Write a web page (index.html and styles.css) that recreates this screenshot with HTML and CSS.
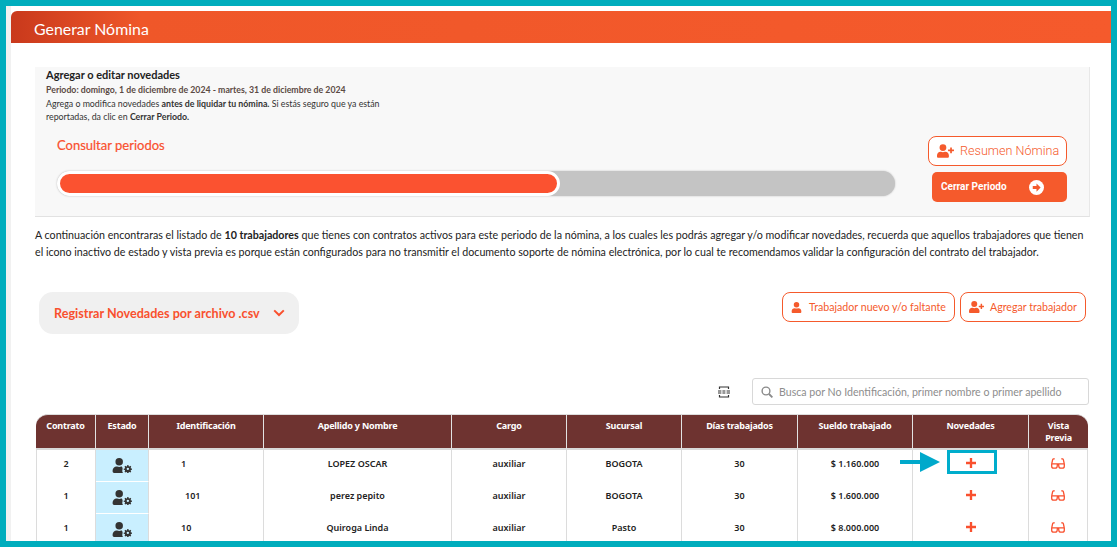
FILE: index.html
```html
<!DOCTYPE html>
<html lang="es">

<head>
    <meta charset="UTF-8">
    <title>Generar Nómina</title>
    <link rel="stylesheet" href="styles.css">
</head>

<body>
    <svg class="defs" width="0" height="0">
        <symbol id="user-plus" viewBox="0 0 640 512">
            <path d="M224 256a128 128 0 1 0 0-256 128 128 0 0 0 0 256zm90 32h-17a174 174 0 0 1-146 0h-17C60 288 0 348 0 422v42c0 26 22 48 48 48h352c26 0 48-22 48-48v-42c0-74-60-134-134-134zM624 200h-64v-64c0-9-7-16-16-16h-32c-9 0-16 7-16 16v64h-64c-9 0-16 7-16 16v32c0 9 7 16 16 16h64v64c0 9 7 16 16 16h32c9 0 16-7 16-16v-64h64c9 0 16-7 16-16v-32c0-9-7-16-16-16z" />
        </symbol>
        <symbol id="user" viewBox="0 0 448 512">
            <path d="M224 256a128 128 0 1 0 0-256 128 128 0 0 0 0 256zm90 32h-17a174 174 0 0 1-146 0h-17C60 288 0 348 0 422v42c0 26 22 48 48 48h352c26 0 48-22 48-48v-42c0-74-60-134-134-134z" />
        </symbol>
        <symbol id="user-cog" viewBox="0 0 640 512">
            <path d="M224 256a128 128 0 1 0 0-256 128 128 0 0 0 0 256zm90 32h-17a174 174 0 0 1-146 0h-17C60 288 0 348 0 422v42c0 26 22 48 48 48h310a80 80 0 0 1-28-62c0-28 2-50 12-72a130 130 0 0 0-28-88z" />
            <path fill-rule="evenodd" d="M500 240l40 0 8 38 26 11 33-21 28 28-21 33 11 26 38 8v40l-38 8-11 26 21 33-28 28-33-21-26 11-8 38h-40l-8-38-26-11-33 21-28-28 21-33-11-26-38-8v-40l38-8 11-26-21-33 28-28 33 21 26-11zm20 90a40 40 0 1 0 0 80 40 40 0 0 0 0-80z" />
        </symbol>
        <symbol id="plus" viewBox="0 0 12 12">
            <path d="M4.600 0h2.800v4.600H12v2.800H7.400V12H4.600V7.400H0V4.600h4.600z" />
        </symbol>
        <symbol id="glasses" viewBox="0 0 14 11">
            <g fill="none" stroke="currentColor" stroke-width="1.300">
                <path d="M.7 5.800h12.600M.7 5.800v2.400c0 1.200.8 2 2 2h1.400c1.200 0 2-.8 2.100-2l.2-2.400M13.300 5.800v2.400c0 1.200-.8 2-2 2H9.900c-1.200 0-2-.8-2.100-2l-.2-2.400" />
                <path d="M.7 5.800L1.600 1.800C1.800 .9 2.800 .6 3.800 1M13.300 5.800L12.400 1.800C12.200 .9 11.200 .6 10.200 1" />
            </g>
        </symbol>
    </svg>

    <div class="frame">
        <header class="page-title">Generar Nómina</header>

        <main>
            <section class="panel">
                <h2>Agregar o editar novedades</h2>
                <p class="period">Periodo: domingo, 1 de diciembre de 2024 - martes, 31 de diciembre de 2024</p>
                <p class="hint">Agrega o modifica novedades <b>antes de liquidar tu nómina.</b> Si estás seguro que ya están reportadas, da clic en <b>Cerrar Periodo.</b></p>

                <div class="panel-row">
                    <div class="progress-col">
                        <h3>Consultar periodos</h3>
                        <div class="progress">
                            <div class="progress-bar"></div>
                        </div>
                    </div>
                    <div class="panel-actions">
                        <button class="btn-line btn-big"><svg class="ico-wide"><use href="#user-plus" /></svg><span>Resumen Nómina</span></button>
                        <button class="btn-solid"><span>Cerrar Periodo</span>
                            <svg class="ico-go" viewBox="0 0 16 16">
                                <circle cx="8" cy="8" r="8" fill="#fff" />
                                <path d="M8 3.600l4.400 4.400L8 12.400V9.600H4V6.400h4z" fill="#f55a2c" />
                            </svg>
                        </button>
                    </div>
                </div>
            </section>

            <p class="intro">A continuación encontraras el listado de <b>10 trabajadores</b> que tienes con contratos activos para este periodo de la nómina, a los cuales les podrás agregar y/o modificar novedades, recuerda que aquellos trabajadores que tienen el icono inactivo de estado y vista previa es porque están configurados para no transmitir el documento soporte de nómina electrónica, por lo cual te recomendamos validar la configuración del contrato del trabajador.</p>

            <div class="tools-row">
                <div class="csv-toggle">Registrar Novedades por archivo .csv
                    <svg viewBox="0 0 12 8" width="12" height="8">
                        <path d="M1.200 1.400L6 6l4.800-4.600" fill="none" stroke="#f9502e" stroke-width="2" />
                    </svg>
                </div>
                <div class="tools-buttons">
                    <button class="btn-line"><svg class="ico-user"><use href="#user" /></svg><span>Trabajador nuevo y/o faltante</span></button>
                    <button class="btn-line"><svg class="ico-wide"><use href="#user-plus" /></svg><span>Agregar trabajador</span></button>
                </div>
            </div>

            <div class="search-row">
                <svg class="ico-export" viewBox="0 0 12 12">
                    <path d="M1.500 3V1h9v2M1.500 9v2h9V9" fill="none" stroke="#333" stroke-width="1.200" />
                    <path d="M0 4.400h3.400v1H0zM0 6.600h3.400v1H0zM4.400 4.400h3v1h-3zM4.400 6.600h3v1h-3zM8.600 4.400H12v1H8.600zM8.600 6.600H12v1H8.600z" fill="#333" />
                </svg>
                <div class="search-box">
                    <svg viewBox="0 0 12 12" width="12" height="12">
                        <circle cx="5" cy="5" r="3.900" fill="none" stroke="#8a8a8a" stroke-width="1.400" />
                        <path d="M8 8l3.400 3.400" stroke="#8a8a8a" stroke-width="1.800" />
                    </svg>
                    <span>Busca por No Identificación, primer nombre o primer apellido</span>
                </div>
            </div>

            <div class="table-wrap">
                <table>
                    <colgroup>
                        <col class="c1"><col class="c2"><col class="c3"><col class="c4"><col class="c5">
                        <col class="c6"><col class="c7"><col class="c8"><col class="c9"><col class="c10">
                    </colgroup>
                    <thead>
                        <tr>
                            <th>Contrato</th>
                            <th>Estado</th>
                            <th>Identificación</th>
                            <th>Apellido y Nombre</th>
                            <th>Cargo</th>
                            <th>Sucursal</th>
                            <th>Días trabajados</th>
                            <th>Sueldo trabajado</th>
                            <th>Novedades</th>
                            <th>Vista Previa</th>
                        </tr>
                    </thead>
                    <tbody>
                        <tr>
                            <td>2</td>
                            <td class="estado"><svg><use href="#user-cog" /></svg></td>
                            <td class="ident">1</td>
                            <td>LOPEZ OSCAR</td>
                            <td>auxiliar</td>
                            <td>BOGOTA</td>
                            <td>30</td>
                            <td>$ 1.160.000</td>
                            <td class="nov">
                                <svg class="ico-plus"><use href="#plus" /></svg>
                                <span class="mark-box"></span>
                                <svg class="mark-arrow" viewBox="0 0 40 20" width="40" height="20">
                                    <path d="M0 8h20V0l20 10-20 10v-8H0z" fill="#00a9cb" />
                                </svg>
                            </td>
                            <td class="vista"><svg><use href="#glasses" /></svg></td>
                        </tr>
                        <tr>
                            <td>1</td>
                            <td class="estado"><svg><use href="#user-cog" /></svg></td>
                            <td class="ident ident-long">101</td>
                            <td>perez pepito</td>
                            <td>auxiliar</td>
                            <td>BOGOTA</td>
                            <td>30</td>
                            <td>$ 1.600.000</td>
                            <td class="nov"><svg class="ico-plus"><use href="#plus" /></svg></td>
                            <td class="vista"><svg><use href="#glasses" /></svg></td>
                        </tr>
                        <tr>
                            <td>1</td>
                            <td class="estado"><svg><use href="#user-cog" /></svg></td>
                            <td class="ident">10</td>
                            <td>Quiroga Linda</td>
                            <td>auxiliar</td>
                            <td>Pasto</td>
                            <td>30</td>
                            <td>$ 8.000.000</td>
                            <td class="nov"><svg class="ico-plus"><use href="#plus" /></svg></td>
                            <td class="vista"><svg><use href="#glasses" /></svg></td>
                        </tr>
                    </tbody>
                </table>
            </div>
        </main>
    </div>
</body>

</html>
```

FILE: styles.css
```css
* {
    box-sizing: border-box;
    padding: 0;
    margin: 0;
}

html,
body {
    height: 547px;
    overflow: hidden;
}

body {
    font-family: Lato, "Liberation Sans", sans-serif;
    color: #222;
    background: #fff;
}

.defs {
    position: absolute;
}

button {
    font-family: inherit;
    cursor: pointer;
}

button span {
    margin-bottom: 2px;
}

.frame {
    height: 547px;
    border: 6px solid #00adbd;
    padding: 5px 0 0 5px;
    background: linear-gradient(90deg, #f1f1f1 5px, #fff 5px);
    overflow: hidden;
}

.page-title {
    height: 32px;
    padding-left: 23px;
    font-size: 15.9px;
    line-height: 35px;
    color: #fff;
    border-radius: 6px 0 0 0;
    background: linear-gradient(90deg, #c9391c 0, #ef5729 130px, #f55a2c 100%);
}

main {
    padding: 24px 21px 0 24px;
}

/* bloque gris de arriba */
.panel {
    height: 150px;
    padding: 1px 22px 0 11px;
    background: #f8f8f8;
    border-bottom: 1px solid #e2e2e2;
    border-right: 1px solid #e8e8e8;
}

.panel h2 {
    font-size: 11px;
    line-height: 14px;
    font-weight: 700;
    color: #222;
}

.period {
    margin-top: 1px;
    font-size: 8.75px;
    line-height: 14px;
    font-weight: 700;
    color: #5b4a44;
}

.hint {
    width: 340px;
    font-size: 8.8px;
    line-height: 13px;
    color: #333;
}

.hint b {
    font-weight: 700;
}

.panel-row {
    display: flex;
    justify-content: space-between;
    margin-top: 13px;
}

.progress-col {
    padding-left: 11px;
}

.progress-col h3 {
    margin-top: -1px;
    font-size: 13px;
    line-height: 20px;
    font-weight: 400;
    color: #f9502e;
    -webkit-text-stroke: 0.2px #f9502e;
}

.progress {
    width: 838px;
    height: 25px;
    margin-top: 16px;
    border-radius: 13px;
    background: #c4c4c4;
    box-shadow: 0 0 2px #bbb;
}

.progress-bar {
    width: 503px;
    height: 25px;
    border-radius: 13px;
    background: #fb5230;
    border: 3px solid #fff;
}

.panel-actions {
    display: flex;
    flex-direction: column;
    align-items: flex-end;
    gap: 6px;
}

.btn-line {
    display: inline-flex;
    align-items: center;
    height: 30px;
    padding: 0 8px;
    font-size: 10.65px;
    color: #f55a2c;
    background: #fff;
    border: 1px solid #f55a2c;
    border-radius: 8px;
    white-space: nowrap;
}

.btn-big {
    width: 139px;
    font-size: 12.6px;
    padding: 0 0 0 8px;
    font-family: Roboto, sans-serif;
    font-weight: 300;
}

.btn-big .ico-wide {
    width: 17px;
    height: 14px;
    margin-right: 6px;
}

.btn-solid {
    display: flex;
    align-items: center;
    justify-content: space-between;
    width: 135px;
    height: 30px;
    padding: 0 23px 0 9px;
    font-family: Roboto, sans-serif;
    font-size: 10px;
    font-weight: 700;
    color: #fff;
    background: #f55a2c;
    border: 0;
    border-radius: 5px;
}

.ico-go {
    width: 15px;
    height: 15px;
}

.ico-wide,
.ico-user {
    fill: #f55a2c;
}

.ico-wide {
    width: 15px;
    height: 12px;
    margin-right: 6px;
}

.ico-user {
    width: 11px;
    height: 11px;
    margin-right: 7px;
}

.intro {
    margin-top: 9px;
    font-size: 10.68px;
    line-height: 17px;
    color: #222;
}

.intro b {
    font-weight: 700;
}

.tools-row {
    display: flex;
    justify-content: space-between;
    align-items: flex-start;
    margin-top: 32px;
    padding: 0 4px 0 4px;
}

.csv-toggle {
    display: flex;
    align-items: center;
    gap: 13px;
    width: 260px;
    height: 42px;
    padding-left: 15px;
    font-size: 12.6px;
    font-weight: 700;
    color: #f9502e;
    background: #f0f0f0;
    border-radius: 14px;
}

.tools-buttons {
    display: flex;
    gap: 5px;
}

.search-row {
    display: flex;
    align-items: center;
    justify-content: flex-end;
    gap: 22px;
    margin-top: 44px;
    padding-right: 1px;
}

.ico-export {
    width: 12px;
    height: 12px;
}

.search-box {
    display: flex;
    align-items: center;
    gap: 6px;
    width: 337px;
    height: 27px;
    padding-left: 8px;
    font-size: 10.6px;
    color: #8d8d8d;
    border: 1px solid #d8d8d8;
    border-radius: 3px;
}

.table-wrap {
    margin: 9px 2px 0 1px;
}

table {
    width: 1052px;
    table-layout: fixed;
    border-collapse: separate;
    border-spacing: 0;
    font-family: "Noto Sans", "Open Sans", sans-serif;
}

.c1 { width: 60px; }
.c2 { width: 53px; }
.c3 { width: 115px; }
.c4 { width: 188px; }
.c5 { width: 115px; }
.c6 { width: 115px; }
.c7 { width: 116px; }
.c8 { width: 115px; }
.c9 { width: 116px; }
.c10 { width: 59px; }

th {
    height: 36px;
    padding: 5px 8px 0;
    vertical-align: top;
    font-size: 9px;
    line-height: 12px;
    font-weight: 700;
    letter-spacing: -0.2px;
    color: #fff;
    background: #6e3330;
    border-top: 1px solid #ddd;
    border-right: 1px solid #e2e2e2;
    border-bottom: 2px solid #d9d9d9;
}

th:first-child {
    border-top-left-radius: 12px;
}

th:last-child {
    padding: 5px 12px 0;
    border-right: 0;
    border-top-right-radius: 12px;
}

td {
    height: 32px;
    padding: 0 0 6px;
    text-align: center;
    font-size: 9px;
    font-weight: 600;
    color: #222;
    border-right: 1px solid #dcdcdc;
}

td:first-child {
    border-left: 1px solid #dcdcdc;
}

.estado {
    background: #c9efff;
    border-bottom: 1px solid #fff;
    padding: 3px 0 0;
}

.estado svg {
    width: 20px;
    height: 15px;
    fill: #333;
}

.ident {
    text-align: left;
    padding-left: 32px;
}

.ident-long {
    padding-left: 36px;
}

.nov,
.vista {
    padding: 0 0 8px;
}

.nov {
    position: relative;
}

.ico-plus {
    width: 10px;
    height: 10px;
    fill: #f9502e;
    vertical-align: middle;
}

.vista svg {
    width: 14px;
    height: 11px;
    color: #f9502e;
    vertical-align: middle;
}

/* marcas de la captura encima de la tabla */
.mark-box {
    position: absolute;
    left: 34px;
    top: 0;
    width: 50px;
    height: 24px;
    border: 3px solid #00adcc;
}

.mark-arrow {
    position: absolute;
    left: -13px;
    top: 2px;
}
```
